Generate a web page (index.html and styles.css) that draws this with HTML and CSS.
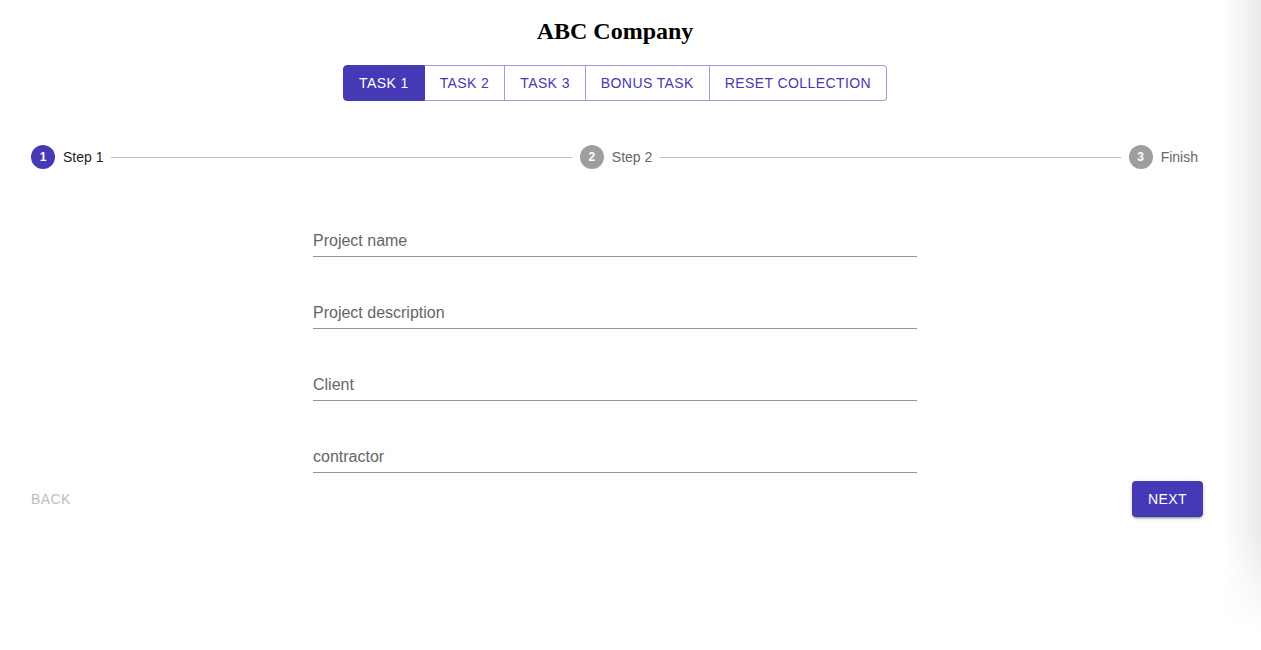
FILE: index.html
```html
<!DOCTYPE html>
<html>
<head>
<meta charset="utf-8">
<title>ABC Company</title>
<link rel="stylesheet" href="styles.css">
</head>
<body>
<div class="edge-shadow"></div>
<main class="page">
  <h2 class="title">ABC Company</h2>
  <div class="tabs">
    <button class="tab active">Task 1</button>
    <button class="tab">Task 2</button>
    <button class="tab">Task 3</button>
    <button class="tab">Bonus Task</button>
    <button class="tab">Reset Collection</button>
  </div>
  <div class="stepper">
    <div class="step active"><span class="step-icon">1</span><span class="step-label">Step 1</span></div>
    <div class="connector"></div>
    <div class="step"><span class="step-icon">2</span><span class="step-label">Step 2</span></div>
    <div class="connector"></div>
    <div class="step"><span class="step-icon">3</span><span class="step-label">Finish</span></div>
  </div>
  <form class="form">
    <div class="field"><span class="field-label">Project name</span></div>
    <div class="field"><span class="field-label">Project description</span></div>
    <div class="field"><span class="field-label">Client</span></div>
    <div class="field"><span class="field-label">contractor</span></div>
  </form>
  <div class="actions">
    <button class="btn-back" disabled>Back</button>
    <button class="btn-next">Next</button>
  </div>
</main>
</body>
</html>
```
FILE: styles.css
```css
html, body {
  margin: 0;
  padding: 0;
  background: #ffffff;
}
body {
  font-family: "Liberation Sans", Arial, sans-serif;
  overflow: hidden;
  width: 1261px;
  height: 650px;
  position: relative;
}
.edge-shadow {
  position: absolute;
  top: 0;
  right: 0;
  width: 40px;
  height: 650px;
  background: linear-gradient(to right, rgba(236,236,236,0) 0%, rgba(236,236,236,0.55) 55%, rgba(234,234,234,1) 100%);
  -webkit-mask-image: linear-gradient(to bottom, #000 0%, #000 82%, rgba(0,0,0,0) 97%);
  mask-image: linear-gradient(to bottom, #000 0%, #000 82%, rgba(0,0,0,0) 97%);
  pointer-events: none;
}
.page {
  width: 1230px;
  padding-top: 17px;
  display: flex;
  flex-direction: column;
  align-items: center;
}
.title {
  margin: 0;
  font-family: "Liberation Serif", "Times New Roman", serif;
  font-weight: bold;
  font-size: 24px;
  line-height: 28px;
  color: #000;
}
.tabs {
  margin-top: 20px;
  display: flex;
  height: 36px;
}
.tab {
  font-family: "Liberation Sans", Arial, sans-serif;
  font-size: 14px;
  letter-spacing: 0.4px;
  text-transform: uppercase;
  background: #fff;
  color: #4539b5;
  border: 1px solid #a39ddb;
  border-left: none;
  padding: 0 15px;
  height: 36px;
  margin: 0;
  cursor: pointer;
}
.tab:first-child {
  border-left: 1px solid #4539b5;
  border-radius: 4px 0 0 4px;
}
.tab:last-child {
  border-radius: 0 4px 4px 0;
}
.tab.active {
  background: #4539b5;
  color: #fff;
  border-color: #4539b5;
}
.stepper {
  align-self: stretch;
  margin-top: 44px;
  padding: 0 24px 0 23px;
  display: flex;
  align-items: center;
  height: 24px;
}
.step {
  display: flex;
  align-items: center;
  padding: 0 8px;
}
.step-icon {
  width: 24px;
  height: 24px;
  border-radius: 50%;
  background: #9e9e9e;
  color: #fff;
  font-size: 12px;
  font-weight: bold;
  display: flex;
  align-items: center;
  justify-content: center;
  margin-right: 8px;
}
.step-label {
  font-size: 14px;
  color: #666666;
}
.step.active .step-icon {
  background: #4539b5;
}
.step.active .step-label {
  color: #1f1f1f;
}
.connector {
  flex: 1;
  border-top: 1px solid #bdbdbd;
}
.form {
  margin: 60px 0 0;
  width: 604px;
  display: flex;
  flex-direction: column;
  gap: 44px;
}
.field {
  height: 27px;
  border-bottom: 1px solid #949494;
}
.field-label {
  display: block;
  font-size: 16px;
  line-height: 24px;
  color: #666666;
}
.actions {
  align-self: stretch;
  margin-top: 8px;
  padding: 0 27px 0 23px;
  display: flex;
  justify-content: space-between;
  align-items: center;
}
.btn-back, .btn-next {
  font-family: "Liberation Sans", Arial, sans-serif;
  font-size: 14px;
  letter-spacing: 0.4px;
  text-transform: uppercase;
  height: 36px;
  border: none;
  border-radius: 4px;
  margin: 0;
}
.btn-back {
  background: transparent;
  color: #bdbdbd;
  padding: 0 8px;
}
.btn-next {
  background: #4539b5;
  color: #fff;
  padding: 0 16px;
  box-shadow: 0 3px 1px -2px rgba(0,0,0,0.2), 0 2px 2px 0 rgba(0,0,0,0.14), 0 1px 5px 0 rgba(0,0,0,0.12);
  cursor: pointer;
}
```
